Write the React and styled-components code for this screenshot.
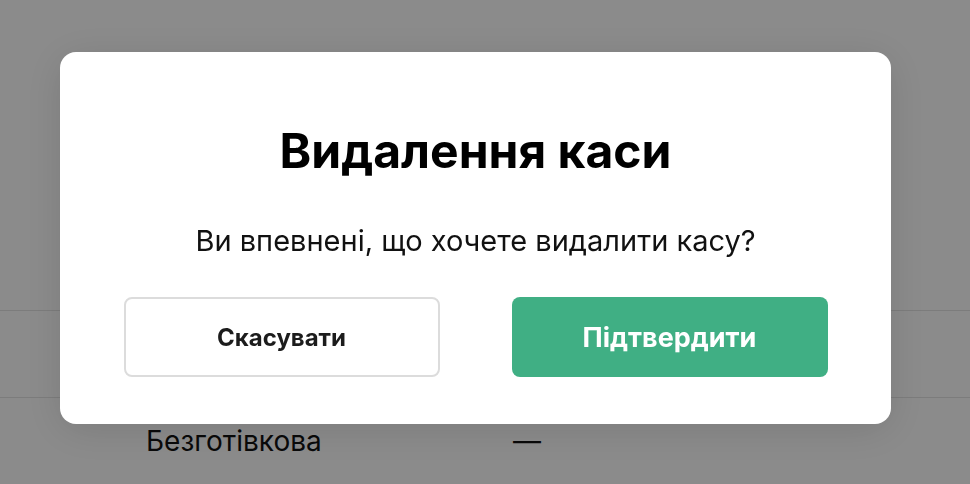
import styled, { createGlobalStyle } from "styled-components";

const GlobalStyle = createGlobalStyle`
  * { box-sizing: border-box; }
  html, body { margin: 0; padding: 0; }
  body {
    background: #fff;
    font-family: Inter, "Noto Sans", sans-serif;
    overflow: hidden;
  }
`;

const rows = [
  { name: "Готівкова", value: "—" },
  { name: "Картка", value: "—" },
  { name: "Безготівкова", value: "—" },
];

export default function App() {
  return (
    <>
      <GlobalStyle />
      <Page>
        <Table>
          {rows.map((row) => (
            <Row key={row.name}>
              <Cell>{row.name}</Cell>
              <Cell>{row.value}</Cell>
            </Row>
          ))}
        </Table>
      </Page>
      <Overlay>
        <Modal>
          <Title>Видалення каси</Title>
          <Message>Ви впевнені, що хочете видалити касу?</Message>
          <Actions>
            <Button>Скасувати</Button>
            <Button primary>Підтвердити</Button>
          </Actions>
        </Modal>
      </Overlay>
    </>
  );
}

const Page = styled.div`
  width: 970px;
  height: 484px;
  padding-top: 224px;
`;

const Table = styled.div`
  display: flex;
  flex-direction: column;
`;

const Row = styled.div`
  display: grid;
  grid-template-columns: 367px 1fr;
  align-items: center;
  height: 87px;
  padding-left: 146px;
  border-bottom: 1px solid #e4e4e4;
`;

const Cell = styled.div`
  font-size: 28px;
  line-height: 34px;
  color: #111;
`;

const Overlay = styled.div`
  position: fixed;
  inset: 0;
  background: rgba(0, 0, 0, 0.455);
  display: flex;
  align-items: center;
  justify-content: center;
  padding: 0 20px 8px 0;
`;

const Modal = styled.div`
  width: 831px;
  height: 372px;
  background: #fff;
  border-radius: 16px;
  box-shadow: 0 6px 40px rgba(0, 0, 0, 0.12);
  padding: 71px 63px 47px 64px;
  display: flex;
  flex-direction: column;
  align-items: center;
`;

const Title = styled.h2`
  margin: 0;
  font-size: 48px;
  line-height: 56px;
  font-weight: 700;
  color: #000;
`;

const Message = styled.p`
  margin: 44px 0 0;
  font-size: 29px;
  line-height: 36px;
  color: #111;
`;

const Actions = styled.div`
  margin-top: 38px;
  width: 100%;
  display: grid;
  grid-template-columns: 316px 316px;
  justify-content: space-between;
`;

const Button = styled.button`
  height: 80px;
  border-radius: 8px;
  font-family: Inter, "Noto Sans", sans-serif;
  font-weight: 700;
  cursor: pointer;
  border: ${(p) => (p.primary ? "none" : "2px solid #dcdcdc")};
  background: ${(p) => (p.primary ? "#40af84" : "#fff")};
  color: ${(p) => (p.primary ? "#fff" : "#1c1c1c")};
  font-size: ${(p) => (p.primary ? "27px" : "24px")};
`;
